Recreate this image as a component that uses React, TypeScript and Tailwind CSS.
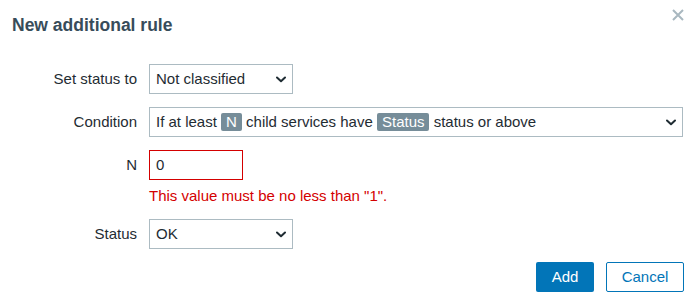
import React from "react";

function Chevron() {
  return (
    <svg width="10" height="7" viewBox="0 0 10 7" className="shrink-0">
      <path d="M1 1.5 L5 5.2 L9 1.5" fill="none" stroke="#1f2c33" strokeWidth="2" strokeLinecap="round" strokeLinejoin="round" />
    </svg>
  );
}

function Select({ width, children }: { width: string; children: React.ReactNode }) {
  return (
    <div
      className={`${width} h-[30px] border border-[#acbbc2] bg-white flex items-center justify-between pl-[6px] pr-[6px] text-[#1f2c33]`}
    >
      <div className="flex items-center whitespace-nowrap">{children}</div>
      <Chevron />
    </div>
  );
}

function Tag({ children }: { children: React.ReactNode }) {
  return (
    <span className="inline-flex items-center h-[18px] px-[5px] rounded-[2px] bg-[#768d99] text-white leading-[18px]">
      {children}
    </span>
  );
}

function Row({ label, children }: { label: string; children: React.ReactNode }) {
  return (
    <div className="flex items-center">
      <div className="w-[137px] shrink-0 text-right text-[#1f2c33]">{label}</div>
      <div className="ml-[12px]">{children}</div>
    </div>
  );
}

export default function App() {
  return (
    <div className="relative w-[691px] h-[304px] bg-white text-[15px] leading-[18px] font-['Liberation_Sans',Arial,sans-serif]">
      <div className="h-[64px] pl-[12px] pt-[15px]">
        <h4 className="text-[17.5px] leading-[21px] font-bold text-[#384c5a]">New additional rule</h4>
      </div>
      <button className="absolute top-[9px] right-[7px] w-[12px] h-[12px]" aria-label="Close">
        <svg width="12" height="12" viewBox="0 0 12 12">
          <path d="M1 1 L11 11 M11 1 L1 11" stroke="#a9b8c0" strokeWidth="2" />
        </svg>
      </button>
      <div className="flex flex-col">
        <Row label="Set status to">
          <Select width="w-[144px]">Not classified</Select>
        </Row>
        <div className="mt-[13px]">
          <Row label="Condition">
            <Select width="w-[534px]">
              <span>If at least&nbsp;</span>
              <Tag>N</Tag>
              <span>&nbsp;child services have&nbsp;</span>
              <Tag>Status</Tag>
              <span>&nbsp;status or above</span>
            </Select>
          </Row>
        </div>
        <div className="mt-[13px]">
          <Row label="N">
            <div className="w-[94px] h-[30px] border border-[#d40000] flex items-center pl-[6px] text-[#1f2c33]">0</div>
          </Row>
        </div>
        <div className="ml-[149px] mt-[6px] leading-[20px] text-[#d40000]">This value must be no less than "1".</div>
        <div className="mt-[13px]">
          <Row label="Status">
            <Select width="w-[144px]">OK</Select>
          </Row>
        </div>
        <div className="mt-[13px] flex justify-end gap-[12px] pr-[7px]">
          <button className="w-[58px] h-[30px] rounded-[2px] bg-[#0275b8] text-white">Add</button>
          <button className="w-[78px] h-[30px] rounded-[2px] border border-[#0275b8] bg-white text-[#0275b8]">Cancel</button>
        </div>
      </div>
    </div>
  );
}
